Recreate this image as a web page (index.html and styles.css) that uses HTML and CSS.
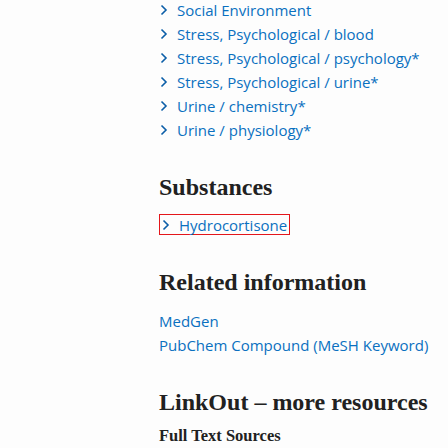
FILE: index.html
```
<!DOCTYPE html>
<html>
<head>
<meta charset="utf-8">
<link rel="stylesheet" href="styles.css">
</head>
<body>
<main class="page">
  <ul class="terms">
    <li><span class="chev"><svg viewBox="0 0 8 12" width="8" height="12"><path d="M1.5 1.5 L6 6 L1.5 10.5" fill="none" stroke="#0b5ea8" stroke-width="1.6"/></svg></span><a href="#">Social Environment</a></li>
    <li><span class="chev"><svg viewBox="0 0 8 12" width="8" height="12"><path d="M1.5 1.5 L6 6 L1.5 10.5" fill="none" stroke="#0b5ea8" stroke-width="1.6"/></svg></span><a href="#">Stress, Psychological / blood</a></li>
    <li><span class="chev"><svg viewBox="0 0 8 12" width="8" height="12"><path d="M1.5 1.5 L6 6 L1.5 10.5" fill="none" stroke="#0b5ea8" stroke-width="1.6"/></svg></span><a href="#">Stress, Psychological / psychology*</a></li>
    <li><span class="chev"><svg viewBox="0 0 8 12" width="8" height="12"><path d="M1.5 1.5 L6 6 L1.5 10.5" fill="none" stroke="#0b5ea8" stroke-width="1.6"/></svg></span><a href="#">Stress, Psychological / urine*</a></li>
    <li><span class="chev"><svg viewBox="0 0 8 12" width="8" height="12"><path d="M1.5 1.5 L6 6 L1.5 10.5" fill="none" stroke="#0b5ea8" stroke-width="1.6"/></svg></span><a href="#">Urine / chemistry*</a></li>
    <li><span class="chev"><svg viewBox="0 0 8 12" width="8" height="12"><path d="M1.5 1.5 L6 6 L1.5 10.5" fill="none" stroke="#0b5ea8" stroke-width="1.6"/></svg></span><a href="#">Urine / physiology*</a></li>
  </ul>

  <h2 class="heading substances-title">Substances</h2>
  <ul class="terms substances">
    <li class="focused"><span class="chev"><svg viewBox="0 0 8 12" width="8" height="12"><path d="M1.5 1.5 L6 6 L1.5 10.5" fill="none" stroke="#0b5ea8" stroke-width="1.6"/></svg></span><a href="#">Hydrocortisone</a></li>
  </ul>

  <h2 class="heading related">Related information</h2>
  <ul class="links">
    <li><a href="#">MedGen</a></li>
    <li><a href="#">PubChem Compound (MeSH Keyword)</a></li>
  </ul>

  <h2 class="heading linkout">LinkOut – more resources</h2>
  <h3 class="subheading">Full Text Sources</h3>
</main>
</body>
</html>
```
FILE: styles.css
```
html, body {
  margin: 0;
  padding: 0;
  background: #fdfdfd;
}
.page {
  padding: 0 0 0 159px;
  font-family: "Open Sans", "Noto Sans", sans-serif;
  font-size: 15px;
  color: #212121;
}
ul {
  list-style: none;
  margin: 0;
  padding: 0;
}
a {
  color: #0a70c0;
  text-decoration: none;
}
.terms {
  margin-top: -2px;
}
.terms li {
  display: flex;
  align-items: center;
  height: 24px;
}
.chev {
  display: inline-flex;
  width: 17px;
  padding-left: 1px;
}
.heading {
  font-family: "Liberation Serif", "Times New Roman", serif;
  font-weight: bold;
  font-size: 24px;
  line-height: 28px;
  margin: 0;
  color: #212121;
}
.substances-title {
  margin-top: 31px;
}
.substances {
  margin-top: 13px;
}
.substances li {
  display: inline-flex;
  box-sizing: border-box;
  height: 21px;
  width: 131px;
  border: 1px solid #e4161b;
  padding-left: 1px;
}
.related {
  margin-top: 33px;
}
.links {
  margin-top: 13px;
}
.links li {
  height: 24px;
  line-height: 24px;
}
.linkout {
  margin-top: 31px;
}
.subheading {
  font-family: "Liberation Serif", "Times New Roman", serif;
  font-weight: bold;
  font-size: 16.5px;
  line-height: 20px;
  margin: 10px 0 0;
  color: #212121;
}
```
